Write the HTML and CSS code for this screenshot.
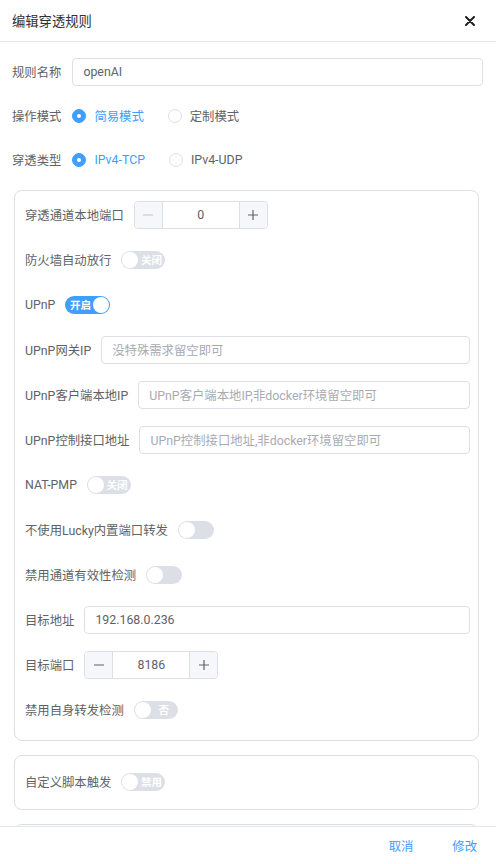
FILE: index.html
```html
<!DOCTYPE html>
<html lang="zh-CN">
<head>
<meta charset="utf-8">
<title>编辑穿透规则</title>
<link rel="stylesheet" href="styles.css">
</head>
<body>
<div class="dialog">
  <div class="header">
    <span class="title">编辑穿透规则</span>
    <svg class="close" width="10" height="10" viewBox="0 0 10 10"><path d="M1 1L9 9M9 1L1 9" stroke="#1f1f1f" stroke-width="2" stroke-linecap="round"/></svg>
  </div>
  <div class="body">
    <div class="row">
      <span class="label">规则名称</span>
      <div class="input"><span class="value">openAI</span></div>
    </div>
    <div class="row">
      <span class="label">操作模式</span>
      <span class="radio on"><i></i>简易模式</span>
      <span class="radio"><i></i>定制模式</span>
    </div>
    <div class="row">
      <span class="label">穿透类型</span>
      <span class="radio on"><i></i>IPv4-TCP</span>
      <span class="radio"><i></i>IPv4-UDP</span>
    </div>

    <div class="card">
      <div class="row">
        <span class="label">穿透通道本地端口</span>
        <div class="number">
          <span class="btn disabled"><svg width="12" height="12" viewBox="0 0 12 12"><path d="M1 6H11" stroke="currentColor" stroke-width="1.2"/></svg></span>
          <span class="num">0</span>
          <span class="btn"><svg width="12" height="12" viewBox="0 0 12 12"><path d="M1 6H11M6 1V11" stroke="currentColor" stroke-width="1.2"/></svg></span>
        </div>
      </div>
      <div class="row">
        <span class="label">防火墙自动放行</span>
        <span class="switch text"><i></i><b>关闭</b></span>
      </div>
      <div class="row">
        <span class="label">UPnP</span>
        <span class="switch text on"><b>开启</b><i></i></span>
      </div>
      <div class="row">
        <span class="label">UPnP网关IP</span>
        <div class="input"><span class="ph">没特殊需求留空即可</span></div>
      </div>
      <div class="row">
        <span class="label">UPnP客户端本地IP</span>
        <div class="input"><span class="ph">UPnP客户端本地IP,非docker环境留空即可</span></div>
      </div>
      <div class="row">
        <span class="label">UPnP控制接口地址</span>
        <div class="input"><span class="ph">UPnP控制接口地址,非docker环境留空即可</span></div>
      </div>
      <div class="row">
        <span class="label">NAT-PMP</span>
        <span class="switch text"><i></i><b>关闭</b></span>
      </div>
      <div class="row">
        <span class="label">不使用Lucky内置端口转发</span>
        <span class="switch"><i></i></span>
      </div>
      <div class="row">
        <span class="label">禁用通道有效性检测</span>
        <span class="switch"><i></i></span>
      </div>
      <div class="row">
        <span class="label">目标地址</span>
        <div class="input"><span class="value">192.168.0.236</span></div>
      </div>
      <div class="row">
        <span class="label">目标端口</span>
        <div class="number">
          <span class="btn"><svg width="12" height="12" viewBox="0 0 12 12"><path d="M1 6H11" stroke="currentColor" stroke-width="1.2"/></svg></span>
          <span class="num">8186</span>
          <span class="btn"><svg width="12" height="12" viewBox="0 0 12 12"><path d="M1 6H11M6 1V11" stroke="currentColor" stroke-width="1.2"/></svg></span>
        </div>
      </div>
      <div class="row">
        <span class="label">禁用自身转发检测</span>
        <span class="switch text"><i></i><b>否</b></span>
      </div>
    </div>

    <div class="card small">
      <div class="row">
        <span class="label">自定义脚本触发</span>
        <span class="switch text"><i></i><b>禁用</b></span>
      </div>
    </div>
    <div class="card small"></div>
  </div>
  <div class="footer">
    <span class="link">取消</span>
    <span class="link">修改</span>
  </div>
</div>
</body>
</html>
```

FILE: styles.css
```css
* { box-sizing: border-box; }
html, body { margin: 0; padding: 0; }
body {
  background: #fff;
  font-family: Roboto, "Noto Sans CJK SC", sans-serif;
  font-size: 12.35px;
  color: #606266;
  height: 864px;
  overflow: hidden;
}
.dialog { position: relative; height: 864px; overflow: hidden; }
.header {
  height: 42px;
  display: flex;
  align-items: center;
  justify-content: space-between;
  padding: 0 21px 0 12px;
  border-bottom: 1px solid #e4e7ed;
}
.title { font-size: 13.3px; color: #303133; }
.close { display: block; }
.body { padding: 16px 13px 0 12px; }
.row {
  display: flex;
  align-items: center;
  height: 28px;
  margin-bottom: 16px;
}
.label { white-space: nowrap; margin-right: 11px; color: #606266; }
.card .label { margin-right: 10px; }
.input {
  flex: 1;
  height: 28px;
  border: 1px solid #dcdfe6;
  border-radius: 4px;
  display: flex;
  align-items: center;
  padding: 0 10px;
  overflow: hidden;
  white-space: nowrap;
}
.value { color: #606266; }
.ph { color: #a8abb2; }
.radio {
  display: flex;
  align-items: center;
  margin-right: 24px;
  color: #606266;
  white-space: nowrap;
}
.radio i {
  width: 14px; height: 14px;
  border-radius: 50%;
  border: 1px solid #dcdfe6;
  background: #fff;
  margin-right: 8px;
  position: relative;
}
.radio.on { color: #409eff; }
.radio.on i { background: #409eff; border-color: #409eff; }
.radio.on i::after {
  content: "";
  position: absolute;
  left: 4px; top: 4px;
  width: 4px; height: 4px;
  border-radius: 50%;
  background: #fff;
}
.card {
  border: 1px solid #dcdfe6;
  border-radius: 8px;
  margin: 2px 4px 14px 2px;
  padding: 10px 8px 1px 10px;
}
.card .row { margin-bottom: 17px; }
.card .row:last-child { margin-bottom: 15px; }
.card.small { padding-top: 12px; padding-bottom: 0; min-height: 54px; margin-top: 0; }
.card.small .row:last-child { margin-bottom: 13px; }
.number {
  display: flex;
  width: 134px;
  height: 28px;
  border: 1px solid #dcdfe6;
  border-radius: 4px;
  overflow: hidden;
}
.number .btn {
  width: 28px;
  background: #f5f7fa;
  color: #606266;
  display: flex;
  align-items: center;
  justify-content: center;
}
.number .btn:first-child { border-right: 1px solid #dcdfe6; }
.number .btn:last-child { border-left: 1px solid #dcdfe6; }
.number .btn.disabled { color: #c0c4cc; }
.number .num {
  flex: 1;
  display: flex;
  align-items: center;
  justify-content: center;
  color: #606266;
}
.switch {
  display: inline-flex;
  align-items: center;
  height: 18px;
  width: 36px;
  border-radius: 9px;
  background: #dcdfe6;
  padding: 0 1px;
  flex: none;
}
.switch i {
  width: 16px; height: 16px;
  border-radius: 50%;
  background: #fff;
  flex: none;
}
.switch.text { width: 44px; }
.switch b {
  flex: 1;
  text-align: center;
  white-space: nowrap;
  font-family: "Noto Sans CJK SC", sans-serif;
  font-weight: bold;
  font-size: 10.5px;
  color: #fff;
  line-height: 18px;
}
.switch.on { background: #409eff; width: 45px; padding-left: 2px; }
.footer {
  position: absolute;
  left: 0; right: 0; bottom: 0;
  height: 38px;
  background: #fff;
  border-top: 1px solid #e4e7ed;
  display: flex;
  justify-content: flex-end;
  align-items: center;
  gap: 39px;
  padding: 0 19px 0 0;
}
.link { color: #409eff; font-size: 12.35px; }
```
